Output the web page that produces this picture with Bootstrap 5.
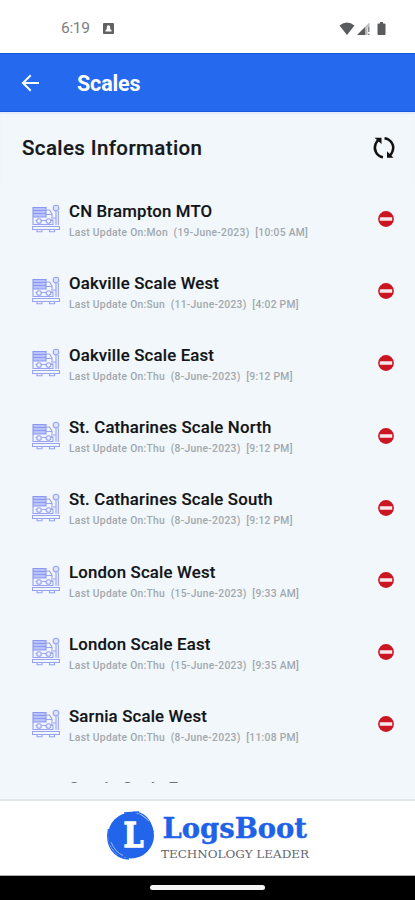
<!DOCTYPE html>
<html lang="en">
<head>
<meta charset="utf-8">
<meta name="viewport" content="width=device-width, initial-scale=1">
<title>Scales</title>
<link href="https://cdn.jsdelivr.net/npm/bootstrap@5.3.0/dist/css/bootstrap.min.css" rel="stylesheet">
<style>
body{font-family:Roboto,"Liberation Sans",sans-serif;background:#f1f7fb;height:900px}
svg{display:block;flex:none}
.status-bar{height:53px;padding:4px 28px 0 61px;color:#7c7e80;font-size:15.5px;letter-spacing:-.3px}
.status-bar .notice{margin-left:13px}
.app-bar{height:59px;background:#2469ee;border-top:1px solid #1459dc;border-bottom:1px solid #1459dc;padding-left:21px;gap:37px}
.app-title{font-size:21.5px;font-weight:700;line-height:1;letter-spacing:-.15px;padding-top:3px}
.section-head{height:71px;padding:1px 19px 0 22px;box-shadow:inset 0 2px 1px #e3eafa}
.section-title{font-size:20.5px;font-weight:500;color:#16191b;letter-spacing:.39px;padding-top:1px;-webkit-text-stroke:.2px #16191b}
.scale-list{height:600px}
.scale-row{height:72.2px;padding:0 21px 0 32px;gap:9px}
.scale-name{font-size:16.8px;font-weight:500;line-height:20px;color:#121416;letter-spacing:.17px;margin-top:2px;-webkit-text-stroke:.15px #121416}
.scale-time{font-size:10.3px;font-weight:500;line-height:14px;color:#a2a7ab;letter-spacing:.28px;white-space:pre;margin-top:5px}
.partial-row{padding-top:15px}
.partial-row .scale-name{color:#6e7174;-webkit-text-stroke:0}
.brand-bar{height:77px;border-top:2px solid #e2e8ea;border-bottom:1px solid #aaa}
.nav-strip{height:24px;background:#000}
.home-pill{width:115px;height:5px;background:#f4f4f4;margin-bottom:1px}
</style>
<script src="https://cdn.jsdelivr.net/npm/bootstrap@5.3.0/dist/js/bootstrap.bundle.min.js"></script>
</head>
<body class="d-flex flex-column overflow-hidden">
<svg width="0" height="0" class="position-absolute" aria-hidden="true">
  <symbol id="truck" viewBox="0 1 28 30">
    <g fill="none" stroke="#98a2f5" stroke-width="1.1">
      <path fill="#b9c2fa" stroke="#8b97f4" d="M1 4.500h13v9.500H1z"/>
      <path stroke="#8b97f4" d="M1 7.500h13M1 10.500h13"/>
      <path d="M14 7h3.500l2.500 4v7M14 11.500h5.500M1 14v7.500h20v-5M3.500 17.500h16"/>
      <circle cx="7" cy="18" r="2.300" fill="#f1f7fb"/><circle cx="16.500" cy="18" r="2.300" fill="#f1f7fb"/>
      <circle cx="24" cy="5" r="2.800" fill="#dde3fc"/><path d="M24 8v14M26.300 8v14M21 15h3M.5 23.500h27v3H.5zM5 27v1.800h5V27M17.500 27v1.800h5V27"/>
    </g>
  </symbol>
  <symbol id="stop" viewBox="0 0 16 16"><circle cx="8" cy="8" r="7.900" fill="#cc1520"/><rect x="1.800" y="6.300" width="12.400" height="3.500" rx=".5" fill="#f7e9ea"/></symbol>
</svg>

<div class="status-bar bg-white d-flex align-items-center flex-shrink-0">
  <span>6:19</span>
  <svg class="notice" width="11" height="11" viewBox="0 0 11 11"><rect width="11" height="11" rx="1" fill="#606163"/><path fill="#fff" d="M2.500 8.500V7l1.300-.8V4a1.700 1.700 0 0 1 3.400 0v2.200L8.500 7v1.500z"/></svg>
  <svg class="ms-auto" width="48" height="16" viewBox="0 0 48 16"><g fill="#5a5b5d"><path d="M.5 4.500Q8 -1.500 15.500 4.500L8 14z"/><path d="M18 14 26.500 5.500V14z"/><path fill="#bbb" d="M26.500 5.500 30.500 1.500V6h-2v8h-2z"/><path fill="#8b8c8e" d="M29 6h1.500v5H29zM29 12.500h1.500V14H29z"/><path d="M39.500 2.500H41V1h3v1.500h1.500q1 0 1 1V13q0 1-1 1h-6q-1 0-1-1V3.500q0-1 1-1z"/></g></svg>
</div>

<header class="app-bar d-flex align-items-center text-white flex-shrink-0">
  <svg width="19" height="18" viewBox="0 0 19 18"><path fill="none" stroke="#fff" stroke-width="2" d="M18 9H2M9.700 1.300 2 9l7.700 7.700"/></svg>
  <h1 class="app-title mb-0">Scales</h1>
</header>

<main class="flex-grow-1">
  <div class="section-head d-flex align-items-center justify-content-between">
    <h2 class="section-title mb-0">Scales Information</h2>
    <svg width="24" height="24" viewBox="0 0 24 24"><g fill="none" stroke="#111" stroke-width="2.500"><path d="M11 21.300C5 20.500 1.300 14 3.500 8.300 4.200 6.300 5.200 5 6.500 4"/><path d="M12.500 2.300C19 3.200 22.800 9.500 20.500 15.300 19.800 17.300 18.800 18.700 17.500 19.700"/></g><path fill="#111" d="M2.500 1.700h7V8zM21.500 21.800H15v-6.500z"/></svg>
  </div>
  <div class="scale-list overflow-hidden">
    <div class="scale-row d-flex align-items-center"><svg width="28" height="30"><use href="#truck"/></svg><div class="flex-grow-1"><div class="scale-name">CN Brampton MTO</div><div class="scale-time">Last Update On:Mon  (19-June-2023)  [10:05 AM]</div></div><svg width="16" height="16"><use href="#stop"/></svg></div>
    <div class="scale-row d-flex align-items-center"><svg width="28" height="30"><use href="#truck"/></svg><div class="flex-grow-1"><div class="scale-name">Oakville Scale West</div><div class="scale-time">Last Update On:Sun  (11-June-2023)  [4:02 PM]</div></div><svg width="16" height="16"><use href="#stop"/></svg></div>
    <div class="scale-row d-flex align-items-center"><svg width="28" height="30"><use href="#truck"/></svg><div class="flex-grow-1"><div class="scale-name">Oakville Scale East</div><div class="scale-time">Last Update On:Thu  (8-June-2023)  [9:12 PM]</div></div><svg width="16" height="16"><use href="#stop"/></svg></div>
    <div class="scale-row d-flex align-items-center"><svg width="28" height="30"><use href="#truck"/></svg><div class="flex-grow-1"><div class="scale-name">St. Catharines Scale North</div><div class="scale-time">Last Update On:Thu  (8-June-2023)  [9:12 PM]</div></div><svg width="16" height="16"><use href="#stop"/></svg></div>
    <div class="scale-row d-flex align-items-center"><svg width="28" height="30"><use href="#truck"/></svg><div class="flex-grow-1"><div class="scale-name">St. Catharines Scale South</div><div class="scale-time">Last Update On:Thu  (8-June-2023)  [9:12 PM]</div></div><svg width="16" height="16"><use href="#stop"/></svg></div>
    <div class="scale-row d-flex align-items-center"><svg width="28" height="30"><use href="#truck"/></svg><div class="flex-grow-1"><div class="scale-name">London Scale West</div><div class="scale-time">Last Update On:Thu  (15-June-2023)  [9:33 AM]</div></div><svg width="16" height="16"><use href="#stop"/></svg></div>
    <div class="scale-row d-flex align-items-center"><svg width="28" height="30"><use href="#truck"/></svg><div class="flex-grow-1"><div class="scale-name">London Scale East</div><div class="scale-time">Last Update On:Thu  (15-June-2023)  [9:35 AM]</div></div><svg width="16" height="16"><use href="#stop"/></svg></div>
    <div class="scale-row d-flex align-items-center"><svg width="28" height="30"><use href="#truck"/></svg><div class="flex-grow-1"><div class="scale-name">Sarnia Scale West</div><div class="scale-time">Last Update On:Thu  (8-June-2023)  [11:08 PM]</div></div><svg width="16" height="16"><use href="#stop"/></svg></div>
    <div class="scale-row partial-row d-flex align-items-start"><svg width="28" height="30" class="invisible"><use href="#truck"/></svg><div class="scale-name">Sarnia Scale East</div></div>
  </div>
</main>

<footer class="flex-shrink-0">
  <div class="brand-bar bg-white d-flex justify-content-center">
    <svg width="207" height="74" viewBox="104 801 207 74">
      <circle cx="131" cy="835.500" r="23" fill="#2265ea"/>
      <path d="M108.500 829C105 846 114 858.500 129 859M133 812C144 812 151 820 153 832M124 813 139 812M109.500 842Q114 854 124 857.500" fill="none" stroke="#2265ea" stroke-width="1.300"/>
      <path d="M111 842Q115 852 123 855.500M141 814.500 149 821" fill="none" stroke="#b9cffa" stroke-width=".8"/>
      <text x="123.500" y="847" font-family="DejaVu Serif" font-weight="700" font-size="34" fill="#fff" stroke="#fff" stroke-width="1.300" textLength="20" lengthAdjust="spacingAndGlyphs">L</text>
      <text x="162.500" y="838" font-family="DejaVu Serif" font-weight="700" font-size="28.500" fill="#1e62e8" stroke="#1e62e8" stroke-width=".4" textLength="144.500" lengthAdjust="spacingAndGlyphs">LogsBoot</text>
      <text x="161" y="858" font-family="DejaVu Serif" font-size="11.700" fill="#62666e" textLength="148" lengthAdjust="spacingAndGlyphs">TECHNOLOGY LEADER</text>
    </svg>
  </div>
  <div class="nav-strip d-flex justify-content-center align-items-center"><div class="home-pill rounded-pill"></div></div>
</footer>
</body>
</html>
